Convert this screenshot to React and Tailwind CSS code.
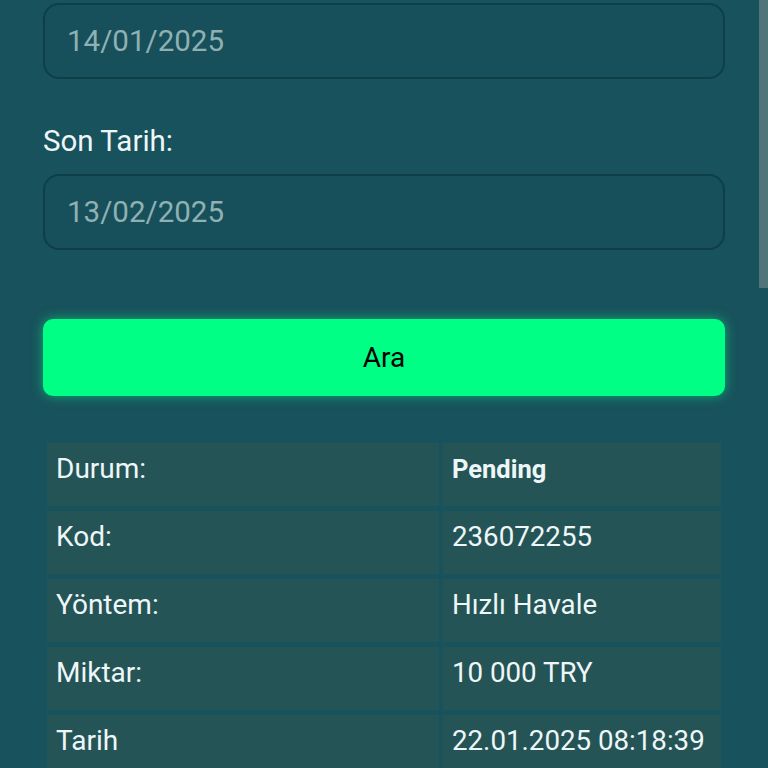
import React from 'react';

const rows = [
    { label: 'Durum:', value: 'Pending', bold: true },
    { label: 'Kod:', value: '236072255' },
    { label: 'Yöntem:', value: 'Hızlı Havale' },
    { label: 'Miktar:', value: '10 000 TRY' },
    { label: 'Tarih', value: '22.01.2025 08:18:39' },
];

function DateInput({ value }) {
    return (
        <input
            type="text"
            readOnly
            placeholder={value}
            className="w-full h-[76px] px-[22px] rounded-2xl bg-[#17505a] border-2 border-[#0f3e47] text-[29.5px] text-[#8fb1b4] placeholder-[#8fb1b4] focus:outline-none"
        />
    );
}

export default function App() {
    return (
        <div className="relative h-[768px] overflow-hidden bg-[#18525c] font-['Roboto','Liberation_Sans',sans-serif]">
            {/* scrollbar thumb */}
            <div className="absolute right-0 top-0 w-[9px] h-[288px] bg-[#51737a]" />

            <div className="pl-[43px] pr-[43px] pt-[3px]">
                <DateInput value="14/01/2025" />

                <label className="block mt-[44px] text-[29.5px] leading-[36px] text-[#eef7f7]">
                    Son Tarih:
                </label>
                <div className="mt-[15px]">
                    <DateInput value="13/02/2025" />
                </div>

                <button
                    type="button"
                    className="mt-[69px] w-full h-[77px] rounded-[10px] bg-[#00ff85] text-black text-[28px] shadow-[0_0_12px_rgba(0,255,133,0.55)]"
                >
                    Ara
                </button>

                <table className="mt-[42px] w-full border-separate border-spacing-x-[4px] border-spacing-y-[5px]">
                    <tbody>
                        {rows.map((r) => (
                            <tr key={r.label}>
                                <td className="w-[392px] h-[63px] align-top pt-2 pl-[9px] bg-[#255457] text-[28px] leading-[36px] text-[#eef7f7]">
                                    {r.label}
                                </td>
                                <td className={`h-[63px] align-top pt-2 pl-[9px] bg-[#255457] leading-[36px] text-[#eef7f7] ${r.bold ? 'font-bold text-[25.5px]' : 'text-[27.7px]'}`}>
                                    {r.value}
                                </td>
                            </tr>
                        ))}
                    </tbody>
                </table>
            </div>
        </div>
    );
}
